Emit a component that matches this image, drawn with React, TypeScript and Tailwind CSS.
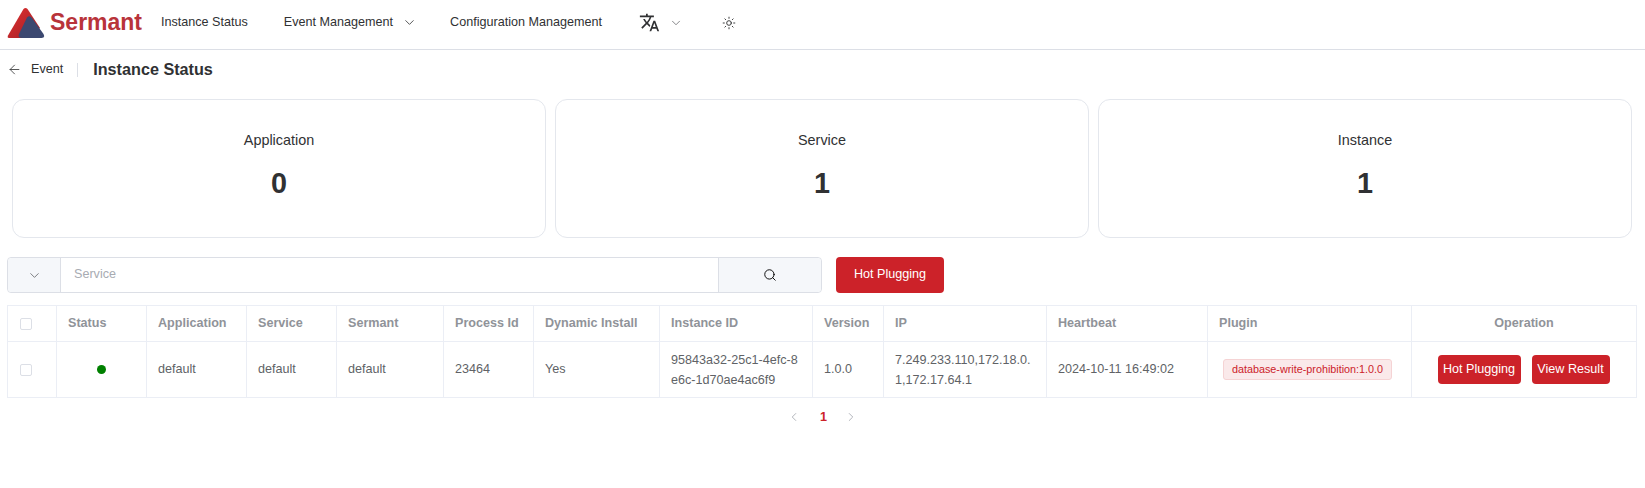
import { ArrowLeft, ChevronDown, ChevronLeft, ChevronRight, Search, Sun } from "lucide-react";
import { MdTranslate } from "react-icons/md";

const stats = [
  { title: "Application", value: 0 },
  { title: "Service", value: 1 },
  { title: "Instance", value: 1 },
];

const columns = [
  { label: "Status", width: "w-[90px]" },
  { label: "Application", width: "w-[100px]" },
  { label: "Service", width: "w-[90px]" },
  { label: "Sermant", width: "w-[107px]" },
  { label: "Process Id", width: "w-[90px]" },
  { label: "Dynamic Install", width: "w-[126px]" },
  { label: "Instance ID", width: "w-[153px]" },
  { label: "Version", width: "w-[71px]" },
  { label: "IP", width: "w-[163px]" },
  { label: "Heartbeat", width: "w-[161px]" },
  { label: "Plugin", width: "w-[204px]" },
];

function Logo() {
  return (
    <div className="flex items-center w-[161px] pl-[7px]">
      <svg width="38" height="32" viewBox="0 0 38 32">
        <defs>
          <linearGradient id="logoRed" x1="0" y1="0" x2="1" y2="1">
            <stop offset="0" stopColor="#e0302f" />
            <stop offset="1" stopColor="#a01f27" />
          </linearGradient>
        </defs>
        <path d="M16.5 2 Q18.5 0 20.5 2 L33 21 L20 31 L2 31 Q0 31 1 28.5 Z" fill="url(#logoRed)" />
        <path d="M20 10.5 Q22.5 8 25 11 L36.5 27 Q38.5 31 34.5 31 L15 31 Q10.5 31 12 27 Z" fill="#3c4870" />
      </svg>
      <span className="ml-[5px] text-[23px] font-bold leading-none text-[#b8333a]">Sermant</span>
    </div>
  );
}

function Checkbox() {
  return <span className="block h-[12px] w-[12px] rounded-[2px] border border-[#dcdfe6] bg-white" />;
}

function PrimaryButton({ label, className }: { label: string; className: string }) {
  return (
    <button className={`rounded-[4px] bg-[#cc2229] text-[12.6px] text-white ${className}`}>{label}</button>
  );
}

export default function App() {
  return (
    <div className="h-[488px] w-[1645px] overflow-hidden bg-white font-['Liberation_Sans',Arial,sans-serif] text-[12.6px] text-[#303133]">
      <header className="flex h-[50px] items-center border-b border-[#dcdfe6] pb-[4px]">
        <Logo />
        <span>Instance Status</span>
        <span className="ml-[36px]">Event Management</span>
        <ChevronDown size={15} strokeWidth={1.3} className="ml-[9px] text-[#303133]" />
        <span className="ml-[33px]">Configuration Management</span>
        <MdTranslate size={21} className="ml-[37px] text-[#303133]" />
        <ChevronDown size={14} strokeWidth={1.3} className="ml-[9px] text-[#606266]" />
        <Sun size={14} strokeWidth={1.6} className="ml-[39px] text-[#303133]" />
      </header>

      <div className="flex h-[49px] items-center pb-[10px] pl-[7px]">
        <ArrowLeft size={15} strokeWidth={1.3} className="text-[#303133]" />
        <span className="ml-[9px]">Event</span>
        <span className="ml-[14px] h-[14px] w-px bg-[#dcdfe6]" />
        <h1 className="ml-[15px] text-[16.2px] font-bold text-[#303133]">Instance Status</h1>
      </div>

      <div className="grid grid-cols-3 gap-[9px] pl-[12px] pr-[13px]">
        {stats.map((stat) => (
          <div key={stat.title} className="flex h-[139px] flex-col items-center rounded-[12px] border border-[#e4e7ed] pt-[32px]">
            <div className="text-[14.4px] leading-[16px]">{stat.title}</div>
            <div className="mt-[18px] text-[28.8px] font-bold leading-[34px]">{stat.value}</div>
          </div>
        ))}
      </div>

      <div className="mt-[19px] flex h-[36px] pl-[7px]">
        <div className="flex w-[815px] rounded-[4px] border border-[#dcdfe6]">
          <div className="flex w-[53px] items-center justify-center rounded-l-[4px] border-r border-[#dcdfe6] bg-[#f5f7fa]">
            <ChevronDown size={15} strokeWidth={1.3} className="text-[#606266]" />
          </div>
          <div className="flex flex-1 items-center pb-[2px] pl-[13px] text-[#a8abb2]">Service</div>
          <div className="flex w-[103px] items-center justify-center rounded-r-[4px] border-l border-[#dcdfe6] bg-[#f5f7fa]">
            <Search size={14} strokeWidth={1.6} className="text-black" />
          </div>
        </div>
        <PrimaryButton label="Hot Plugging" className="ml-[14px] w-[108px] pb-[2px]" />
      </div>

      <div className="ml-[7px] mt-[12px] w-[1630px]">
        <table className="w-full table-fixed border-collapse">
          <thead>
            <tr className="h-[36px] text-left text-[#909399]">
              <th className="w-[49px] border border-[#ebeef5] pl-[12px]">
                <Checkbox />
              </th>
              {columns.map((column) => (
                <th key={column.label} className={`${column.width} border border-[#ebeef5] px-[11px] font-bold`}>
                  {column.label}
                </th>
              ))}
              <th className="border border-[#ebeef5] px-[11px] text-center font-bold">Operation</th>
            </tr>
          </thead>
          <tbody className="text-[#606266]">
            <tr className="h-[56px]">
              <td className="border border-[#ebeef5] pl-[12px]">
                <Checkbox />
              </td>
              <td className="border border-[#ebeef5]">
                <span className="mx-auto block h-[9px] w-[9px] rounded-full bg-[#008000]" />
              </td>
              <td className="border border-[#ebeef5] px-[11px]">default</td>
              <td className="border border-[#ebeef5] px-[11px]">default</td>
              <td className="border border-[#ebeef5] px-[11px]">default</td>
              <td className="border border-[#ebeef5] px-[11px]">23464</td>
              <td className="border border-[#ebeef5] px-[11px]">Yes</td>
              <td className="border border-[#ebeef5] px-[11px] leading-[20px] break-all">95843a32-25c1-4efc-8e6c-1d70ae4ac6f9</td>
              <td className="border border-[#ebeef5] px-[11px]">1.0.0</td>
              <td className="border border-[#ebeef5] px-[11px] leading-[20px] break-all">7.249.233.110,172.18.0.1,172.17.64.1</td>
              <td className="border border-[#ebeef5] px-[11px]">2024-10-11 16:49:02</td>
              <td className="border border-[#ebeef5] px-[15px]">
                <span className="flex h-[21px] w-[169px] items-center justify-center rounded-[3px] border border-[#f5d3d4] bg-[#fae9ea] text-[10.8px] text-[#cc2229]">
                  database-write-prohibition:1.0.0
                </span>
              </td>
              <td className="border border-[#ebeef5]">
                <div className="flex justify-center gap-[11px] pr-[1px]">
                  <PrimaryButton label="Hot Plugging" className="h-[29px] w-[83px]" />
                  <PrimaryButton label="View Result" className="h-[29px] w-[78px]" />
                </div>
              </td>
            </tr>
          </tbody>
        </table>
      </div>

      <div className="mt-[10px] flex items-center justify-center">
        <ChevronLeft size={14} strokeWidth={1.5} className="text-[#a8abb2]" />
        <span className="ml-[19px] mr-[17px] font-bold text-[#cc2229]">1</span>
        <ChevronRight size={14} strokeWidth={1.5} className="text-[#a8abb2]" />
      </div>
    </div>
  );
}
